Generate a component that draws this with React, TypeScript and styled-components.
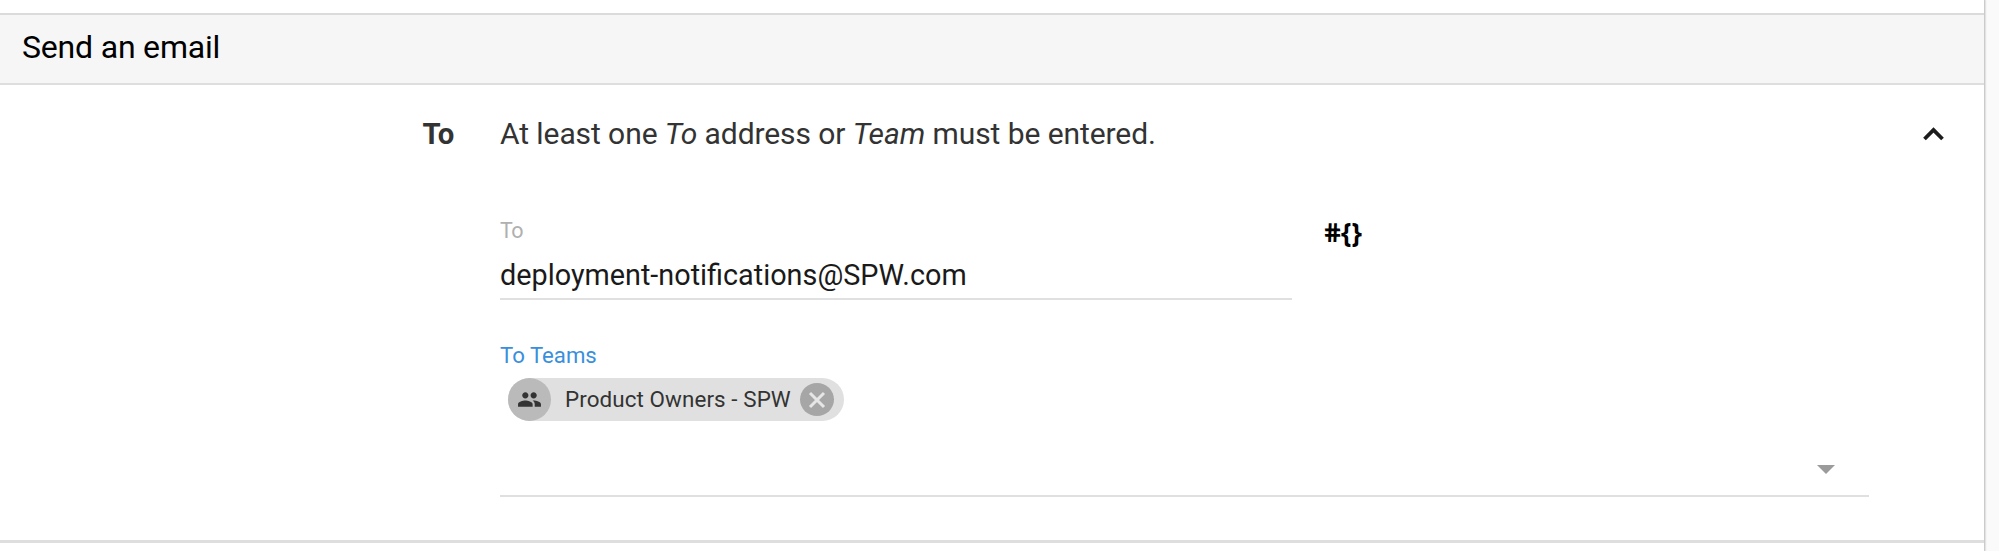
import React from 'react';
import styled, { createGlobalStyle } from 'styled-components';

const GlobalStyle = createGlobalStyle`
  * { box-sizing: border-box; }
  body { margin: 0; background: #fafafa; font-family: Roboto, "Liberation Sans", sans-serif; }
`;

const Page = styled.main`
  height: 551px;
  overflow: hidden;
`;

const Card = styled.section`
  width: 1984px;
  height: 551px;
  padding-top: 13px;
  background: #fff;
  box-shadow: 0 0 2px 1px rgba(0, 0, 0, 0.28);
`;

const Header = styled.header`
  display: flex;
  align-items: center;
  height: 72px;
  padding: 0 22px 4px;
  border-top: 2px solid #dbdbdb;
  border-bottom: 2px solid #dedede;
  background: #f6f6f6;
`;

const Title = styled.h1`
  margin: 0;
  font-size: 32px;
  font-weight: 400;
  line-height: 36px;
  letter-spacing: -0.19px;
  color: #000;
  white-space: nowrap;
`;

const Body = styled.div`
  height: 458px;
  padding-top: 31px;
  border-bottom: 3px solid #dedede;
`;

const SummaryRow = styled.div`
  display: flex;
  align-items: center;
  height: 36px;
  padding-right: 39px;
`;

const SummaryLabel = styled.div`
  width: 454px;
  margin-right: 46px;
  text-align: right;
  font-size: 29.3px;
  font-weight: 700;
  line-height: 36px;
  letter-spacing: -0.3px;
  color: #333;
`;

const SummaryText = styled.p`
  flex: 1;
  margin: 0;
  font-size: 30px;
  line-height: 36px;
  letter-spacing: -0.08px;
  color: #333;
  white-space: nowrap;
`;

const Chevron = styled.svg`
  display: block;
  width: 24px;
  height: 16px;
`;

const Fields = styled.div`
  width: 1369px;
  margin: 66px 0 0 500px;
`;

const InputRow = styled.div`
  display: flex;
  align-items: flex-start;
  height: 82px;
`;

const Field = styled.label`
  display: block;
  width: 792px;
  height: 82px;
  border-bottom: 2px solid #e0e0e0;
`;

const Label = styled.span<{ $active?: boolean }>`
  display: block;
  font-size: ${({ $active }) => ($active ? '22.2px' : '21.5px')};
  line-height: 26px;
  letter-spacing: ${({ $active }) => ($active ? '0' : '-0.5px')};
  color: ${({ $active }) => ($active ? '#3a8fdc' : '#b0b0b0')};
`;

const Input = styled.input`
  display: block;
  width: 100%;
  height: 36px;
  margin-top: 13px;
  padding: 0;
  border: 0;
  outline: 0;
  background: transparent;
  font: 400 28.8px/36px Roboto, "Liberation Sans", sans-serif;
  color: #1a1a1a;
`;

const BindButton = styled.button`
  display: flex;
  margin: -1px 0 0 32px;
  padding: 0;
  border: 0;
  background: none;
  font: 700 26.4px/30px "Noto Sans", sans-serif;
  color: #000;
`;

const Hash = styled.span`
  display: inline-block;
  transform: skewX(9deg);
`;

const TeamsField = styled.div`
  height: 155px;
  margin-top: 42px;
  border-bottom: 2px solid #e0e0e0;
`;

const Chip = styled.div`
  display: flex;
  align-items: center;
  width: 336px;
  height: 43px;
  margin: 10px 0 0 8px;
  border-radius: 22px;
  background: #e0e0e0;
`;

const ChipAvatar = styled.span`
  display: flex;
  align-items: center;
  justify-content: center;
  width: 43px;
  height: 43px;
  border-radius: 50%;
  background: #bababa;
`;

const ChipText = styled.span`
  width: 234px;
  padding: 0 0 2px 14px;
  font-size: 22.4px;
  line-height: 26px;
  letter-spacing: 0.09px;
  color: #333;
  white-space: nowrap;
`;

const ChipRemove = styled.button`
  display: flex;
  align-items: center;
  justify-content: center;
  width: 34px;
  height: 33px;
  margin-left: 15px;
  padding: 0;
  border: 0;
  border-radius: 50%;
  background: #a6a6a6;
`;

const SelectArrow = styled.svg`
  display: block;
  width: 18px;
  height: 9px;
  margin: 44px 0 0 1316.5px;
`;

export default function App() {
  return (
    <Page>
      <GlobalStyle />
      <Card>
        <Header>
          <Title>Send an email</Title>
        </Header>
        <Body>
          <SummaryRow>
            <SummaryLabel>To</SummaryLabel>
            <SummaryText>
              At least one <em>To</em> address or <em>Team</em> must be entered.
            </SummaryText>
            <Chevron viewBox="0 0 24 16">
              <path d="M3.5 13 12.500 4 21.500 13" fill="none" stroke="#1c1c1c" strokeWidth="3.8" />
            </Chevron>
          </SummaryRow>
          <Fields>
            <InputRow>
              <Field>
                <Label>To</Label>
                <Input defaultValue="deployment-notifications@SPW.com" spellCheck={false} />
              </Field>
              <BindButton type="button">
                <Hash>#</Hash>
                {'{}'}
              </BindButton>
            </InputRow>
            <TeamsField>
              <Label $active>To Teams</Label>
              <Chip>
                <ChipAvatar>
                  <svg width="25" height="25" viewBox="0 0 24 24" fill="#333">
                    <path d="M16 11c1.66 0 2.99-1.34 2.99-3S17.66 5 16 5s-3 1.34-3 3 1.34 3 3 3zm-8 0c1.66 0 2.99-1.34 2.99-3S9.66 5 8 5 5 6.34 5 8s1.34 3 3 3zm0 2c-2.33 0-7 1.17-7 3.5V19h14v-2.5c0-2.33-4.67-3.5-7-3.5zm8 0c-.29 0-.62.02-.97.05 1.16.84 1.97 1.97 1.97 3.45V19h6v-2.5c0-2.33-4.67-3.5-7-3.5z" />
                  </svg>
                </ChipAvatar>
                <ChipText>Product Owners - SPW</ChipText>
                <ChipRemove type="button" aria-label="Remove">
                  <svg width="18" height="18" viewBox="0 0 18 18">
                    <path d="M2 2 16 16M16 2 2 16" stroke="#e6e6e6" strokeWidth="3" />
                  </svg>
                </ChipRemove>
              </Chip>
              <SelectArrow viewBox="0 0 18 9">
                <path d="M0 0h18L9 9z" fill="#9b9b9b" />
              </SelectArrow>
            </TeamsField>
          </Fields>
        </Body>
      </Card>
    </Page>
  );
}
